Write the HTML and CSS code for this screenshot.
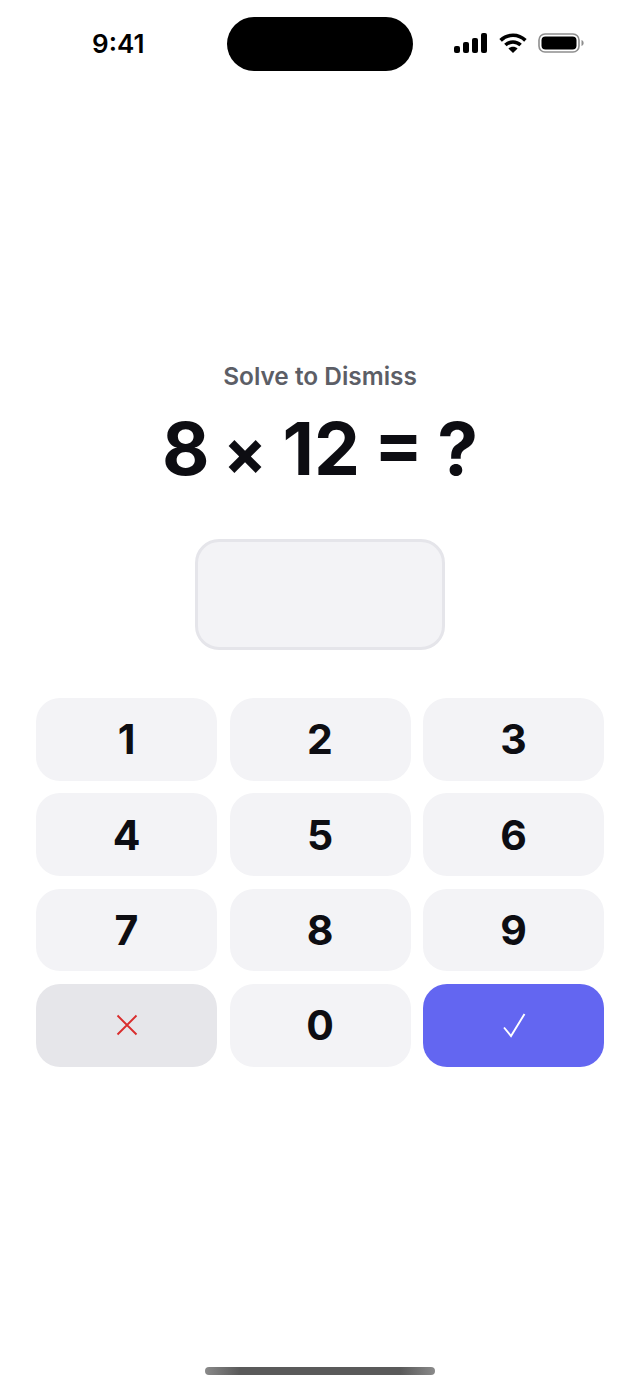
FILE: index.html
```html
<!DOCTYPE html>
<html lang="en">
<head>
    <meta charset="UTF-8">
    <meta name="viewport" content="width=device-width, initial-scale=1.0">
    <title>Solve to Dismiss</title>
    <link rel="stylesheet" href="styles.css">
</head>
<body>

<div class="page">
    <header class="status-bar">
        <span class="time">9:41</span>
        <div class="island"></div>
        <div class="status-icons">
            <svg width="33" height="20" viewBox="0 0 33 20" fill="#000">
                <rect x="0" y="13" width="6" height="7" rx="2"/>
                <rect x="9" y="9" width="6" height="11" rx="2"/>
                <rect x="18" y="5" width="6" height="15" rx="2"/>
                <rect x="27" y="0" width="6" height="20" rx="2"/>
            </svg>
            <svg width="28" height="20" viewBox="0 0 28 20" fill="none" stroke="#000" stroke-width="3.6">
                <path d="M1.6 7.4C8.6 0.6 19.4 0.6 26.4 7.4"/>
                <path d="M6.4 12C10.8 7.9 17.2 7.9 21.6 12"/>
                <path d="M14 20L9.4 15.4C12 13.2 16 13.2 18.6 15.4Z" fill="#000" stroke="none"/>
            </svg>
            <svg width="46" height="20" viewBox="0 0 46 20" fill="none">
                <rect x="1" y="1" width="40" height="18" rx="6" stroke="#8e8e8e" stroke-width="1.6"/>
                <rect x="3.5" y="3.5" width="35" height="13" rx="4" fill="#000"/>
                <path d="M43.5 7C45 7.5 45.6 8.6 45.6 10C45.6 11.4 45 12.5 43.5 13Z" fill="#8e8e8e"/>
            </svg>
        </div>
    </header>

    <main class="challenge">
        <p class="prompt">Solve to Dismiss</p>
        <h1 class="equation">8 <span class="times">×</span> 12 = ?</h1>
        <div class="answer"></div>

        <div class="keypad">
            <button class="key">1</button>
            <button class="key">2</button>
            <button class="key">3</button>
            <button class="key">4</button>
            <button class="key">5</button>
            <button class="key">6</button>
            <button class="key">7</button>
            <button class="key">8</button>
            <button class="key">9</button>
            <button class="key key-clear" aria-label="Clear">
                <svg width="24" height="24" viewBox="0 0 24 24" fill="none" stroke="#d92d2d" stroke-width="1.9">
                    <path d="M2.5 2.5L21.5 21.5M21.5 2.5L2.5 21.5"/>
                </svg>
            </button>
            <button class="key">0</button>
            <button class="key key-submit" aria-label="Submit">
                <svg width="24" height="26" viewBox="0 0 24 26" fill="none" stroke="#fff" stroke-width="1.9">
                    <path d="M2 15.5L9 24L22.5 2"/>
                </svg>
            </button>
        </div>
    </main>

    <div class="home-indicator"></div>
</div>

</body>
</html>
```

FILE: styles.css
```css
* {
    box-sizing: border-box;
}

body {
    margin: 0;
    background-color: #fff;
    font-family: 'Inter', sans-serif;
    color: #0d0d12;
}

.page {
    height: 100vh;
    display: flex;
    flex-direction: column;
    overflow: hidden;
}

.status-bar {
    height: 88px;
    padding: 17px 56px 0;
    display: grid;
    grid-template-columns: 1fr 186px 1fr;
    align-items: start;
}

.time {
    margin: 9px 0 0 36px;
    font-size: 26px;
    line-height: 36px;
    font-weight: 600;
    color: #000;
}

.island {
    height: 54px;
    border-radius: 27px;
    background-color: #000;
}

.status-icons {
    margin-top: 16px;
    display: flex;
    justify-content: flex-end;
    align-items: center;
    gap: 11.5px;
}

.challenge {
    padding: 270px 36px 0;
    display: flex;
    flex-direction: column;
    align-items: center;
}

.prompt {
    margin: 0;
    font-size: 24.4px;
    line-height: 36px;
    font-weight: 600;
    color: #5c5e66;
}

.equation {
    margin: 11px 0 0;
    font-size: 73px;
    line-height: 88px;
    font-weight: 700;
    word-spacing: -3.5px;
}

.times {
    font-size: 64px;
    line-height: 1;
    margin-right: 2px;
}

.answer {
    width: 250px;
    height: 111px;
    margin-top: 46px;
    background-color: #f3f3f6;
    border: 3px solid #e5e5ea;
    border-radius: 24px;
}

.keypad {
    width: 100%;
    margin-top: 48px;
    display: grid;
    grid-template-columns: repeat(3, 1fr);
    grid-auto-rows: 82.8px;
    gap: 12.5px;
}

.key {
    border: none;
    border-radius: 24px;
    background-color: #f3f3f6;
    color: #0d0d12;
    font-family: inherit;
    font-size: 41px;
    font-weight: 700;
    display: flex;
    align-items: center;
    justify-content: center;
    padding: 0;
}

.key-clear {
    background-color: #e6e6ea;
}

.key-submit {
    background-color: #6366f1;
}

.home-indicator {
    width: 230px;
    height: 8px;
    margin: auto auto 12px;
    border-radius: 4px;
    background: linear-gradient(to right, #8a8a8a, #5a5a5a 15%, #5a5a5a 85%, #8a8a8a);
}
```
